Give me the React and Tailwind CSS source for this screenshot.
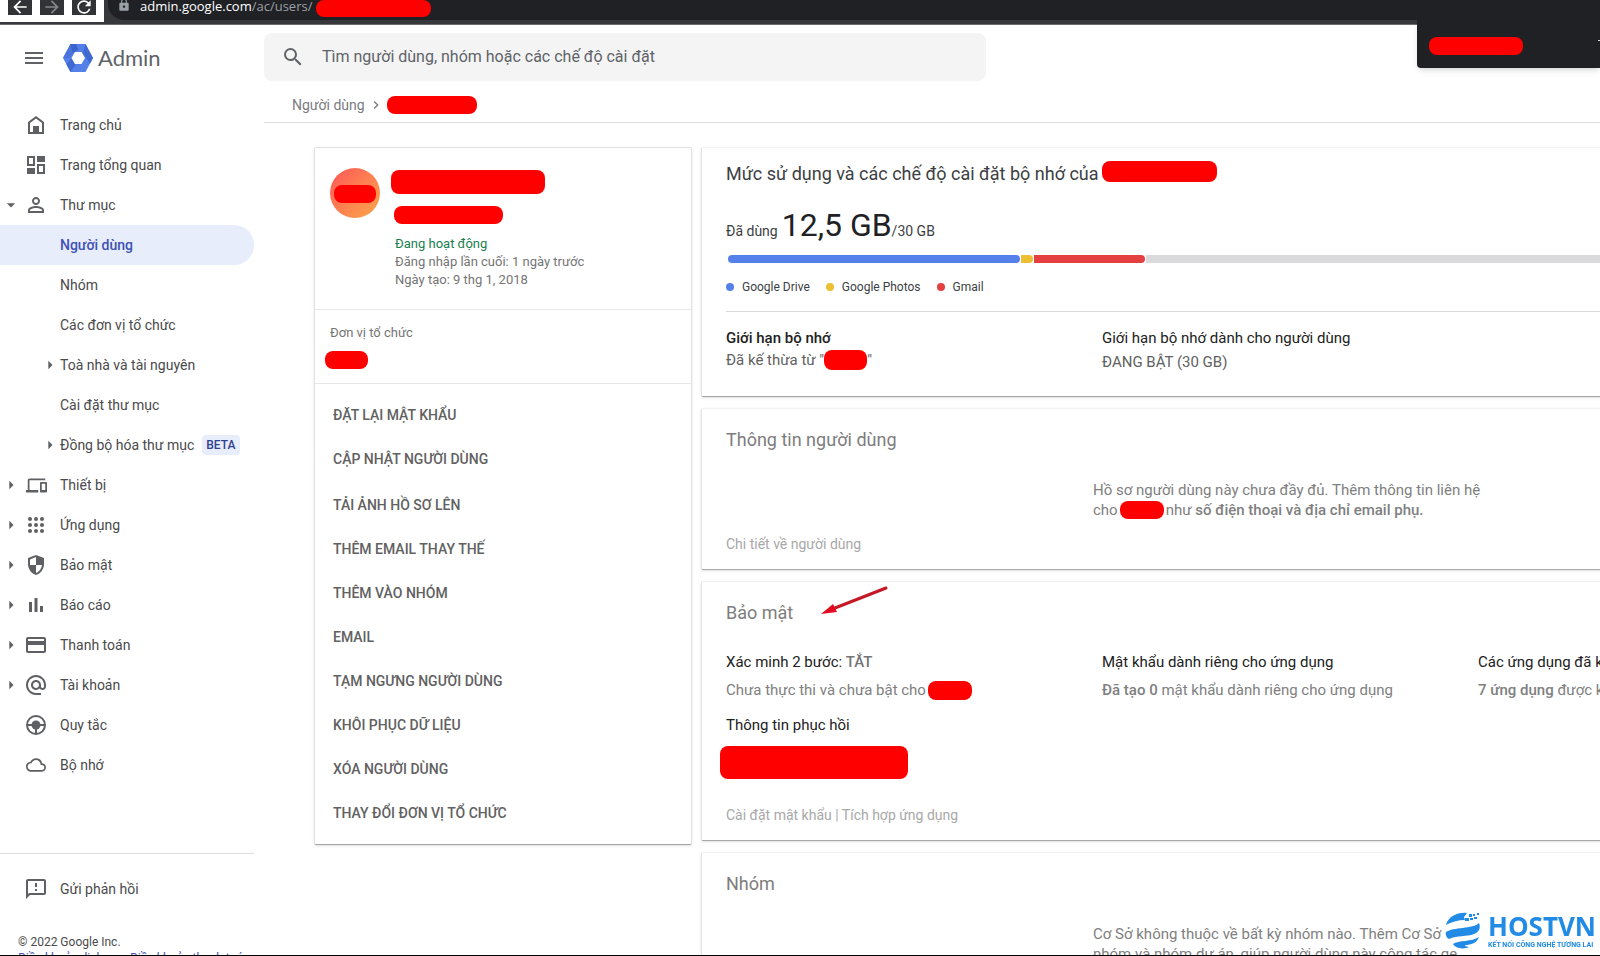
import {
  MdMenu, MdSearch, MdPersonOutline, MdDevices, MdCreditCard, MdAlternateEmail,
  MdCloudQueue, MdOutlineFeedback, MdArrowDropDown, MdArrowRight, MdChevronRight,
  MdArrowBack, MdArrowForward, MdRefresh, MdLock,
} from 'react-icons/md'

function Svg({ children }) {
  return (
    <svg viewBox="0 0 24 24" width="24" height="24" fill="currentColor" aria-hidden="true">
      {children}
    </svg>
  )
}

const HomeIcon = () => (
  <Svg>
    <path fillRule="evenodd" d="M12 3l8 6v12H4V9l8-6zm0 2.500L6 10v9h12v-9l-6-4.500z" />
    <path d="M9 13h6v7H9z" />
  </Svg>
)

const DashboardIcon = () => (
  <Svg>
    <path fillRule="evenodd" d="M3 3h8v10H3V3zm2 2v6h4V5H5z" />
    <path d="M13 3h8v6h-8zM3 15h8v6H3z" />
    <path fillRule="evenodd" d="M13 11h8v10h-8V11zm2 2v6h4v-6h-4z" />
  </Svg>
)

const AppsIcon = () => (
  <Svg>
    {[6, 12, 18].map((y) => [6, 12, 18].map((x) => <circle key={`${x}-${y}`} cx={x} cy={y} r="2" />))}
  </Svg>
)

const ShieldIcon = () => (
  <Svg>
    <path d="M12 2L4 5v6.100C4 16.100 7.400 20.900 12 22c4.600-1.100 8-5.900 8-10.900V5l-8-3z" />
    <path fill="#fff" d="M12 4.100V12H6V6.400zM12 12h5.900c-.400 3.700-2.700 6.900-5.900 7.900z" />
  </Svg>
)

const ReportIcon = () => (
  <Svg>
    <path d="M5 9h3v10H5zM10.500 5h3v14h-3zM16 13h3v6h-3z" />
  </Svg>
)

const WheelIcon = () => (
  <Svg>
    <circle cx="12" cy="12" r="9" fill="none" stroke="currentColor" strokeWidth="2" />
    <circle cx="12" cy="12" r="4.500" />
    <path d="M3 11h18v2H3zM11 12h2v9h-2z" />
  </Svg>
)

const NAV = [
  { label: 'Trang chủ', icon: HomeIcon },
  { label: 'Trang tổng quan', icon: DashboardIcon },
  { label: 'Thư mục', icon: MdPersonOutline, open: true },
  { label: 'Người dùng', active: true },
  { label: 'Nhóm' },
  { label: 'Các đơn vị tổ chức' },
  { label: 'Toà nhà và tài nguyên', subArrow: true },
  { label: 'Cài đặt thư mục' },
  { label: 'Đồng bộ hóa thư mục', subArrow: true, badge: 'BETA' },
  { label: 'Thiết bị', icon: MdDevices, iconSize: 21, arrow: true },
  { label: 'Ứng dụng', icon: AppsIcon, arrow: true },
  { label: 'Bảo mật', icon: ShieldIcon, arrow: true },
  { label: 'Báo cáo', icon: ReportIcon, arrow: true },
  { label: 'Thanh toán', icon: MdCreditCard, arrow: true },
  { label: 'Tài khoản', icon: MdAlternateEmail, arrow: true },
  { label: 'Quy tắc', icon: WheelIcon },
  { label: 'Bộ nhớ', icon: MdCloudQueue, iconSize: 20 },
]

const ACTION_GROUPS = [
  ['ĐẶT LẠI MẬT KHẨU', 'CẬP NHẬT NGƯỜI DÙNG'],
  [
    'TẢI ẢNH HỒ SƠ LÊN',
    'THÊM EMAIL THAY THẾ',
    'THÊM VÀO NHÓM',
    'EMAIL',
    'TẠM NGƯNG NGƯỜI DÙNG',
    'KHÔI PHỤC DỮ LIỆU',
    'XÓA NGƯỜI DÙNG',
    'THAY ĐỔI ĐƠN VỊ TỔ CHỨC',
  ],
]

const LEGEND = [
  { label: 'Google Drive', dot: 'bg-[#5580e9]' },
  { label: 'Google Photos', dot: 'bg-[#edbf33]' },
  { label: 'Gmail', dot: 'bg-[#e4403f]' },
]

// Solid bar that hides a private value
function Redacted({ className }) {
  return <span className={`block shrink-0 rounded-lg bg-[#ff0000] ${className}`} />
}

function BrowserBar() {
  return (
    <div className="relative z-10 flex h-[25px] shrink-0 border-b border-[#6b6c6e] bg-[#37383b]">
      <div className="flex h-[22px] w-[104px] shrink-0 items-start gap-2 bg-white pl-2 text-white">
        <button aria-label="Quay lại" className="flex h-[15px] w-6 items-end justify-center overflow-hidden bg-[#323337]">
          <MdArrowBack size={20} className="-mb-0.5 shrink-0" />
        </button>
        <button aria-label="Tiến" className="flex h-[15px] w-6 items-end justify-center overflow-hidden bg-[#323337] text-[#85868a]">
          <MdArrowForward size={20} className="-mb-0.5 shrink-0" />
        </button>
        <button aria-label="Tải lại" className="flex h-[15px] w-6 items-end justify-center overflow-hidden bg-[#323337]">
          <MdRefresh size={20} className="-mb-0.5 shrink-0" />
        </button>
      </div>
      <div className="ml-1 flex h-5 flex-1 items-start rounded-bl-2xl bg-[#202124] pl-[9px]">
        <MdLock size={14} className="-mt-0.5 mr-[9px] text-[#9aa0a6]" />
        <span className="-mt-[3px] mr-1 font-['Open_Sans',sans-serif] text-[13px] leading-[18px] text-[#9aa0a6]">
          <span className="text-white">admin.google.com</span>/ac/users/
        </span>
        <Redacted className="h-[17px] w-[115px]" />
      </div>
      <div className="absolute top-5 right-0 flex h-12 w-[183px] items-center justify-between rounded-bl bg-[#202124] pt-1 pl-3 shadow-md">
        <Redacted className="h-[18px] w-[94px]" />
        <span className="mb-3 h-px w-0.5 bg-gray-300" />
      </div>
    </div>
  )
}

function Logo() {
  return (
    <svg viewBox="0 0 30 28" width="30" height="28" aria-hidden="true">
      <path d="M7.500 0h15L30 14l-7.500 14h-15L0 14z" fill="#5480e8" />
      <path d="M7.500 0h7.500l-5.500 9.500L7 14 0 14z" fill="#4a74dd" />
      <path d="M7.500 0h5l3 5.500-6 3.500z" fill="#3c63cb" />
      <path d="M22.500 0L30 14l-3 5.500L20 9z" fill="#4069d2" />
      <path d="M3.500 20.500L8.500 14l4 7-5 7z" fill="#4069d2" />
      <path d="M12 8h6.500l3.500 6-3.500 6H12l-3.500-6z" fill="#fff" />
    </svg>
  )
}

function NavItem({ item }) {
  const Icon = item.icon
  return (
    <a
      href="#"
      className={`flex h-10 items-center rounded-r-full ${item.active ? 'bg-[#e7edfb] font-medium text-[#3f51b5]' : 'text-[#4a4a4c]'}`}
    >
      <span className="flex w-6 justify-center pr-0.5 text-[#5f6063]">
        {item.open && <MdArrowDropDown size={20} className="shrink-0" />}
        {item.arrow && <MdArrowRight size={20} className="shrink-0" />}
      </span>
      <span className="flex w-9 text-[#5f6063]">
        {Icon && (
          <span className="flex w-6 justify-center">
            <Icon size={item.iconSize ?? 24} />
          </span>
        )}
        {item.subArrow && <MdArrowRight size={20} className="ml-auto shrink-0" />}
      </span>
      <span>{item.label}</span>
      {item.badge && (
        <span className="ml-2 rounded bg-[#e7edfb] px-1 text-xs leading-5 font-medium text-[#33408f]">{item.badge}</span>
      )}
    </a>
  )
}

function Sidebar() {
  return (
    <aside className="flex w-[254px] shrink-0 flex-col text-sm">
      <div className="flex h-[66px] shrink-0 items-center pl-[22px] text-[#5f6368]">
        <button aria-label="Trình đơn chính">
          <MdMenu size={24} />
        </button>
        <a href="#" className="ml-[17px] flex items-center gap-[5px]">
          <Logo />
          <span className="font-[Lato,sans-serif] text-[22px] leading-7">Admin</span>
        </a>
      </div>
      <nav className="pt-[14px]">
        {NAV.map((item) => (
          <NavItem key={item.label} item={item} />
        ))}
      </nav>
      <div className="mt-17 border-t border-[#dadce0] pt-[15px]">
        <a href="#" className="flex h-10 items-center gap-3 pl-6 text-[#4a4a4c]">
          <MdOutlineFeedback size={24} className="text-[#5f6063]" />
          Gửi phản hồi
        </a>
      </div>
      <footer className="pt-[25px] pl-[18px] text-xs leading-4 whitespace-nowrap text-[#4a4a4c]">
        <p>© 2022 Google Inc.</p>
        <p className="flex gap-1 text-[#3f51b5]">
          <a href="#">Điều khoản dịch vụ</a>-<a href="#">Điều khoản thanh toán</a>
        </p>
      </footer>
    </aside>
  )
}

function TopBar() {
  return (
    <header className="border-b border-[#dadce0]">
      <label className="mt-2 flex h-12 w-[722px] items-center rounded-lg bg-[#f4f4f4] pl-[17px] text-[#5f6368]">
        <MdSearch size={24} className="mr-[17px]" />
        <input
          type="search"
          aria-label="Tìm kiếm"
          placeholder="Tìm người dùng, nhóm hoặc các chế độ cài đặt"
          className="flex-1 bg-transparent text-base outline-none placeholder:text-[#5f6368]"
        />
      </label>
      <nav className="flex h-[41px] items-center pt-1.5 pl-7 text-sm text-[#7b7c7f]">
        <a href="#">Người dùng</a>
        <MdChevronRight size={16} className="mx-[3px]" />
        <Redacted className="h-[18px] w-[90px]" />
      </nav>
    </header>
  )
}

function ProfileCard() {
  return (
    <section className="w-[378px] shrink-0 self-start rounded-xs border border-b-[#a8a8a8] border-[#e2e2e2] text-[13px] leading-[18px] text-[#757575] shadow-sm">
      <div className="flex border-b border-[#e8e8e8] px-[15px] pt-5 pb-5">
        <div className="flex size-[50px] items-center justify-center rounded-full bg-linear-to-br from-[#fd5457] to-[#faa548]">
          <Redacted className="mt-0.5 h-[18px] w-[42px]" />
        </div>
        <div className="ml-[11px]">
          <Redacted className="mt-0.5 h-6 w-[154px]" />
          <Redacted className="mt-3 ml-[3px] h-[18px] w-[109px]" />
          <div className="mt-[11px] ml-1">
            <p className="text-[#188050]">Đang hoạt động</p>
            <p>Đăng nhập lần cuối: 1 ngày trước</p>
            <p>Ngày tạo: 9 thg 1, 2018</p>
          </div>
        </div>
      </div>
      <div className="h-[74px] border-b border-[#e8e8e8] px-[15px] pt-[14px]">
        <p>Đơn vị tổ chức</p>
        <Redacted className="mt-[9px] -ml-[5px] h-[18px] w-[43px]" />
      </div>
      <div className="flex flex-col gap-0.5 py-[9px]">
        {ACTION_GROUPS.map((group) => (
          <div key={group[0]} className="flex flex-col">
            {group.map((action) => (
              <button key={action} className="h-11 px-[18px] text-left text-sm font-medium text-[#616161]">
                {action}
              </button>
            ))}
          </div>
        ))}
      </div>
    </section>
  )
}

function Card({ title, titleClass = 'pt-[19px] text-[#7d7d7d]', className = '', children }) {
  return (
    <section
      className={`rounded-xs border border-t-[#f2f2f2] border-b-[#a8a8a8] border-[#e2e2e2] pl-6 text-[15px] leading-5 shadow-sm ${className}`}
    >
      <h2 className={`flex items-center text-lg leading-6 ${titleClass}`}>{title}</h2>
      {children}
    </section>
  )
}

function StorageCard() {
  return (
    <Card
      title={
        <>
          Mức sử dụng và các chế độ cài đặt bộ nhớ của
          <Redacted className="-mt-1.5 ml-[3px] h-[21px] w-[115px]" />
        </>
      }
      titleClass="pt-[14px] text-[#3c4043]"
      className="h-[250px]"
    >
      <p className="mt-[21px] flex items-baseline text-sm leading-9 text-[#3c4043]">
        Đã dùng <span className="ml-1 text-[32px] text-[#202124]">12,5 GB</span>/30 GB
      </p>
      <div className="mt-1.5 ml-0.5 flex h-2 gap-px">
        <span className="w-[292px] rounded-full bg-[#5580e9]" />
        <span className="w-3 rounded-r-full bg-[#edbf33]" />
        <span className="w-[111px] rounded-r-full bg-[#e4403f]" />
        <span className="flex-1 bg-[#dadadd]" />
      </div>
      <ul className="mt-4 flex gap-4 text-xs leading-4 text-[#3c4043]">
        {LEGEND.map(({ label, dot }) => (
          <li key={label} className="flex items-center gap-2">
            <span className={`size-2 rounded-full ${dot}`} />
            {label}
          </li>
        ))}
      </ul>
      <div className="mt-4 flex border-t border-[#dadadd] pt-4 text-[#616161]">
        <div className="w-[376px]">
          <h3 className="font-medium text-[#212121]">Giới hạn bộ nhớ</h3>
          <p className="flex items-center pt-0.5">
            Đã kế thừa từ "<Redacted className="h-5 w-[43px]" />"
          </p>
        </div>
        <div>
          <h3 className="text-[#212121]">Giới hạn bộ nhớ dành cho người dùng</h3>
          <p className="pt-1">ĐANG BẬT (30 GB)</p>
        </div>
      </div>
    </Card>
  )
}

function SecurityCard() {
  return (
    <Card title="Bảo mật" className="h-[260px]">
      <div className="flex pt-[27px] whitespace-nowrap text-[#808080]">
        <div className="w-[376px] shrink-0">
          <h3 className="text-[#212121]">
            Xác minh 2 bước: <b className="font-medium text-[#757575]">TẮT</b>
          </h3>
          <p className="mt-2 flex items-center gap-0.5">
            Chưa thực thi và chưa bật cho
            <Redacted className="h-[19px] w-11" />
          </p>
          <h3 className="mt-[15px] text-[#212121]">Thông tin phục hồi</h3>
          <Redacted className="mt-[11px] -ml-1.5 h-[33px] w-[188px]" />
        </div>
        <div className="w-[376px] shrink-0">
          <h3 className="text-[#212121]">Mật khẩu dành riêng cho ứng dụng</h3>
          <p className="mt-2">
            <b className="font-medium">Đã tạo 0</b> mật khẩu dành riêng cho ứng dụng
          </p>
        </div>
        <div className="w-[376px] shrink-0">
          <h3 className="text-[#212121]">Các ứng dụng đã kết nối</h3>
          <p className="mt-2">
            <b className="font-medium">7 ứng dụng</b> được kết nối
          </p>
        </div>
      </div>
      <p className="mt-[26px] text-sm leading-5 text-[#a8a8a8]">
        <a href="#">Cài đặt mật khẩu</a> | <a href="#">Tích hợp ứng dụng</a>
      </p>
    </Card>
  )
}

function HostLogo() {
  return (
    <div className="fixed right-1 bottom-1.5 flex items-center gap-[7px] text-[#228be6]">
      <svg viewBox="0 0 36 38" width="36" height="38" fill="currentColor" aria-hidden="true">
        <path d="M1 13C3 5 12 0 22 1l-3 4 1 3C13 8 6 10 1 13z" />
        <path d="M20 6h4v3h-4zM24 2h3v3h-3zM28 2h2v2h-2zM32 1h2v2h-2zM25 6h3v2h-3zM29 5h3v2h-3z" />
        <path d="M1 20c7-5 27-3 33-9 2 5 0 9-5 11-7 3-17 1-25 5-2-1-4-4-3-7z" />
        <path d="M8 32c5-4 19-2 26-7-2 6-8 8-14 8 0 1 2 2 4 2-6 3-14 1-16-3z" />
      </svg>
      <div className="whitespace-nowrap">
        <p className="font-['Open_Sans',sans-serif] text-[26px] leading-7 font-bold">HOSTVN</p>
        <p className="text-[7px] leading-[10px] font-bold">KẾT NỐI CÔNG NGHỆ TƯƠNG LAI</p>
      </div>
    </div>
  )
}

export default function App() {
  return (
    <div className="flex h-screen flex-col overflow-hidden bg-white font-[Roboto,sans-serif]">
      <BrowserBar />
      <div className="flex min-h-0 flex-1">
        <Sidebar />
        <div className="ml-[10px] min-w-0 flex-1">
          <TopBar />
          <main className="-mr-6 flex gap-[9px] pt-6 pl-[50px]">
            <ProfileCard />
            <div className="flex min-w-0 flex-1 flex-col gap-[11px]">
              <StorageCard />
              <Card title="Thông tin người dùng" className="h-[162px]">
                <div className="pt-7 pl-[367px] text-[#808080]">
                  <p>Hồ sơ người dùng này chưa đầy đủ. Thêm thông tin liên hệ</p>
                  <p className="flex items-center gap-0.5">
                    cho
                    <Redacted className="h-[18px] w-11" />
                    <span>
                      như <b className="font-medium">số điện thoại và địa chỉ email phụ.</b>
                    </span>
                  </p>
                </div>
                <a href="#" className="mt-[14px] block text-sm leading-5 text-[#a8a8a8]">
                  Chi tiết về người dùng
                </a>
              </Card>
              <div className="relative">
                <SecurityCard />
                <svg className="absolute top-1 left-[118px]" width="70" height="34" viewBox="0 0 70 34" aria-hidden="true">
                  <path d="M67 3L16 23" stroke="#c51724" strokeWidth="3" strokeLinecap="round" />
                  <path d="M2 29L14 19l4 8z" fill="#e30b20" />
                </svg>
              </div>
              <Card title="Nhóm" className="h-[162px]">
                <div className="pt-7 pl-[367px] whitespace-nowrap text-[#808080]">
                  <p>Cơ Sở không thuộc về bất kỳ nhóm nào. Thêm Cơ Sở</p>
                  <p>nhóm và nhóm dự án, giúp người dùng này cộng tác ge</p>
                </div>
              </Card>
            </div>
          </main>
        </div>
      </div>
      <HostLogo />
      <div className="fixed inset-x-0 bottom-0 h-px bg-black" />
    </div>
  )
}
